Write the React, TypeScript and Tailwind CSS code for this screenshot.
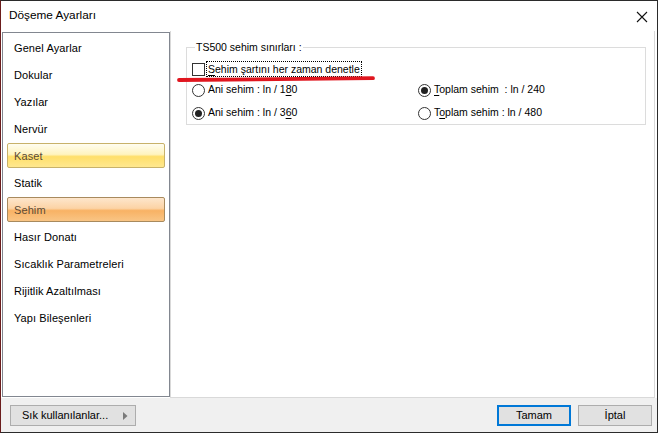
import React from "react";

const menuItems = [
  "Genel Ayarlar",
  "Dokular",
  "Yazılar",
  "Nervür",
  "Kaset",
  "Statik",
  "Sehim",
  "Hasır Donatı",
  "Sıcaklık Parametreleri",
  "Rijitlik Azaltılması",
  "Yapı Bileşenleri",
];

function MenuItem({ label }: { label: string }) {
  if (label === "Kaset") {
    return (
      <div className="h-[27px] px-[4px]">
        <div className="flex h-[25px] items-center rounded-[2px] border border-[#c8b26a] bg-[linear-gradient(to_bottom,#fffdf0_0%,#fff4bf_45%,#ffdf6a_55%,#ffe88f_100%)] pl-[6px] pt-[1px] text-[#5b4a35]">
          {label}
        </div>
      </div>
    );
  }
  if (label === "Sehim") {
    return (
      <div className="h-[27px] px-[4px]">
        <div className="flex h-[25px] items-center rounded-[2px] border border-[#a88a5e] bg-[linear-gradient(to_bottom,#fde6cc_0%,#fcd3a5_45%,#f8b264_55%,#f9c585_100%)] pl-[6px] pt-[1px] text-[#5b4a35]">
          {label}
        </div>
      </div>
    );
  }
  return (
    <div className="flex h-[27px] items-center pl-[11px] pb-[1px]">{label}</div>
  );
}

function Radio({ checked }: { checked?: boolean }) {
  return (
    <span className="flex h-[13px] w-[13px] shrink-0 items-center justify-center rounded-full border border-[#333] bg-white">
      {checked && <span className="h-[7px] w-[7px] rounded-full bg-[#222]" />}
    </span>
  );
}

export default function App() {
  return (
    <div className="relative flex h-[433px] w-[658px] flex-col border border-[#2b2b2b] border-l-[#6b1d1d] bg-white font-['Liberation_Sans',Arial,sans-serif] text-black">
      {/* title */}
      <div className="flex h-[30px] shrink-0 items-center justify-between pl-[8px] pr-[9px]">
        <span className="text-[11.8px]">Döşeme Ayarları</span>
        <svg width="12" height="12" viewBox="0 0 12 12" className="mt-[1px]">
          <path d="M1 1 L11 11 M11 1 L1 11" stroke="#111" strokeWidth="1.1" />
        </svg>
      </div>

      {/* content */}
      <div className="flex h-[367px] shrink-0">
        <div className="ml-[1px] mt-[1px] h-[365px] w-[168px] border border-[#828790] bg-white pt-[2px] text-[11px] tracking-[0.1px]">
          {menuItems.map((m) => (
            <MenuItem key={m} label={m} />
          ))}
        </div>

        <div className="mr-[2px] flex-1 border-x border-b border-[#d9d9d9] bg-white">
          <div className="relative ml-[15px] mt-[16px] w-[460px] border border-[#dcdcdc] pb-[3px] pt-[13px] text-[10.5px]">
            <span className="absolute -top-[7px] left-[8px] bg-white px-[1px] leading-[13px]">
              TS500 sehim sınırları :
            </span>

            <div className="flex h-[16px] items-center pl-[5px]">
              <span className="h-[13px] w-[13px] shrink-0 border border-[#333] bg-white" />
              <span className="ml-[1px] border border-dotted border-black px-[1px] leading-[14px]">
                <span className="underline underline-offset-2">S</span>ehim şartını her zaman denetle
              </span>
            </div>

            <div className="mt-[5px] grid grid-cols-[226px_1fr] pl-[5px]">
              <div className="flex h-[16px] items-center">
                <Radio />
                <span className="ml-[3px]">
                  Ani sehim : ln / 1<span className="underline underline-offset-2">8</span>0
                </span>
              </div>
              <div className="flex h-[16px] items-center">
                <Radio checked />
                <span className="ml-[3px] whitespace-pre">
                  <span className="underline underline-offset-2">T</span>oplam sehim  : ln / 240
                </span>
              </div>
              <div className="mt-[7px] flex h-[16px] items-center">
                <Radio checked />
                <span className="ml-[3px]">
                  Ani sehim : ln / 3<span className="underline underline-offset-2">6</span>0
                </span>
              </div>
              <div className="mt-[7px] flex h-[16px] items-center">
                <Radio />
                <span className="ml-[3px]">
                  T<span className="underline underline-offset-2">o</span>plam sehim : ln / 480
                </span>
              </div>
            </div>
          </div>
        </div>
      </div>

      {/* bottom bar */}
      <div className="flex flex-1 items-start justify-between bg-[#f0f0f0] pl-[9px] pr-[5px] pt-[7px] text-[11px]">
        <button
          type="button"
          className="flex h-[21px] w-[126px] items-center justify-between border border-[#adadad] bg-[#e1e1e1] pl-[11px] pr-[7px]"
        >
          <span>Sık kullanılanlar...</span>
          <svg width="5" height="8" viewBox="0 0 5 8">
            <path d="M0 0 L4.5 4 L0 8 Z" fill="#7a7a7a" />
          </svg>
        </button>
        <div className="flex gap-[7px]">
          <button
            type="button"
            className="flex h-[21px] w-[74px] items-center justify-center border-2 border-[#0078d7] bg-[#e1e1e1]"
          >
            Tamam
          </button>
          <button
            type="button"
            className="flex h-[21px] w-[74px] items-center justify-center border border-[#adadad] bg-[#e1e1e1]"
          >
            İptal
          </button>
        </div>
      </div>

      {/* red annotation stroke */}
      <svg
        className="pointer-events-none absolute left-[176px] top-[74px]"
        width="200"
        height="9"
        viewBox="0 0 200 9"
      >
        <path d="M2 5 Q100 4.2 196 3.2" stroke="#e0161f" strokeWidth="3.8" strokeLinecap="round" fill="none" />
      </svg>
    </div>
  );
}
